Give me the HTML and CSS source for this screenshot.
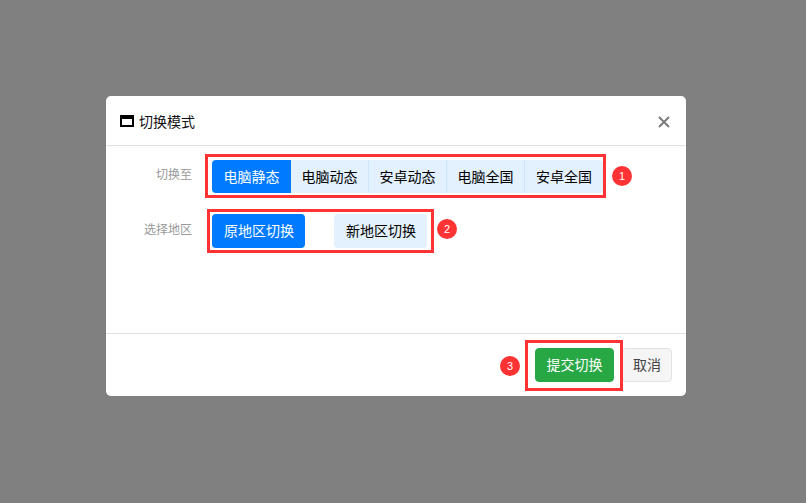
FILE: index.html
```html
<!DOCTYPE html>
<html lang="zh">
<head>
<meta charset="utf-8">
<title>切换模式</title>
<link rel="stylesheet" href="styles.css">
</head>
<body>
<div class="modal">
  <header class="modal-header">
    <h5 class="modal-title">
      <svg class="title-icon" width="14" height="12" viewBox="0 0 14 12"><path fill="#000" fill-rule="evenodd" d="M0 0h14v12H0zM2 4v6h10V4z"/></svg>
      <span>切换模式</span>
    </h5>
    <svg class="close" width="12" height="12" viewBox="0 0 12 12"><path d="M1 1l10 10M11 1L1 11" stroke="#7b7b7b" stroke-width="2" fill="none"/></svg>
  </header>
  <div class="modal-body">
    <div class="row row-one">
      <div class="label">切换至</div>
      <div class="group">
        <a class="seg active">电脑静态</a>
        <a class="seg">电脑动态</a>
        <a class="seg">安卓动态</a>
        <a class="seg">电脑全国</a>
        <a class="seg">安卓全国</a>
      </div>
    </div>
    <div class="row row-two">
      <div class="label">选择地区</div>
      <div class="regions">
        <a class="region active">原地区切换</a>
        <a class="region">新地区切换</a>
      </div>
    </div>
  </div>
  <footer class="modal-footer">
    <button class="btn btn-submit">提交切换</button>
    <button class="btn btn-cancel">取消</button>
  </footer>
  <div class="mark mark-one"></div>
  <div class="mark mark-two"></div>
  <div class="mark mark-three"></div>
  <div class="badge badge-one">1</div>
  <div class="badge badge-two">2</div>
  <div class="badge badge-three">3</div>
</div>
</body>
</html>
```
FILE: styles.css
```css
* { box-sizing: border-box; }
html, body { margin: 0; height: 100%; }
body {
  background: #808080;
  font-family: "Liberation Sans", "Noto Sans CJK SC", sans-serif;
  padding: 96px 0 0 106px;
  overflow: hidden;
}
.modal {
  position: relative;
  width: 580px;
  height: 300px;
  background: #fff;
  border-radius: 5px;
  display: flex;
  flex-direction: column;
}
.modal-header {
  height: 50px;
  flex: none;
  display: flex;
  align-items: center;
  justify-content: space-between;
  padding: 0 16px 0 14px;
  border-bottom: 1px solid #dee2e6;
}
.modal-title {
  margin: 0;
  display: flex;
  align-items: center;
  gap: 5px;
  font-size: 14px;
  font-weight: 400;
  color: #111;
}
.close { margin-top: 3px; }
.modal-body { flex: 1; padding: 14px 0 0; }
.row { display: flex; align-items: center; }
.row-two { margin-top: 21px; }
.label {
  width: 86px;
  text-align: right;
  margin-right: 20px;
  font-size: 12px;
  color: #999;
}
.row-one .label { position: relative; top: -3px; }
.row-two .label { position: relative; top: -3px; }
.group { display: flex; }
.seg {
  height: 33px;
  width: 78px;
  padding-bottom: 2px;
  display: flex;
  align-items: center;
  justify-content: center;
  background: #e3f0fd;
  color: #000;
  font-size: 14px;
  border-right: 1px solid #cfe4fb;
}
.seg:first-child { border-right: 0; width: 79px; border-radius: 4px 0 0 4px; }
.seg:last-child { border-right: 0; border-radius: 0 4px 4px 0; }
.seg.active, .region.active { background: #007bff; color: #fff; }
.regions { display: flex; gap: 29px; }
.region {
  width: 93px;
  height: 34px;
  padding: 0 0 2px 1px;
  display: flex;
  align-items: center;
  justify-content: center;
  background: #e3f0fd;
  color: #000;
  font-size: 14px;
  border-radius: 4px;
}
.modal-footer {
  height: 63px;
  flex: none;
  display: flex;
  align-items: flex-start;
  justify-content: flex-end;
  gap: 8px;
  padding: 14px 14px 0 0;
  border-top: 1px solid #dee2e6;
}
.btn {
  height: 34px;
  border-radius: 4px;
  font: inherit;
  font-size: 14px;
  padding: 0 0 2px;
}
.btn-submit { width: 79px; background: #28a745; border: 1px solid #28a745; color: #fff; }
.btn-cancel { width: 50px; background: #f5f5f5; border: 1px solid #e2e2e2; color: #444; }
.mark { position: absolute; border: 3px solid #ff3333; pointer-events: none; }
.mark-one { left: 99px; top: 58px; width: 401px; height: 44px; }
.mark-two { left: 101px; top: 113px; width: 227px; height: 44px; }
.mark-three { left: 419px; top: 244px; width: 98px; height: 51px; }
.badge {
  position: absolute;
  width: 20px;
  height: 20px;
  border-radius: 50%;
  background: #ff3333;
  color: #fff;
  font-size: 11px;
  display: flex;
  align-items: center;
  justify-content: center;
}
.badge-one { left: 506px; top: 70px; }
.badge-two { left: 331px; top: 123px; }
.badge-three { left: 394px; top: 260px; }
```
